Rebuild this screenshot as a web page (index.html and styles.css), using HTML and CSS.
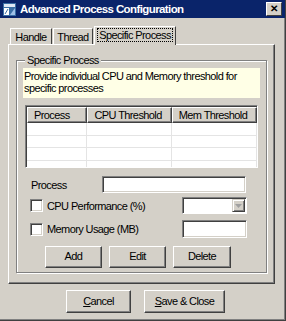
FILE: index.html
```html
<!DOCTYPE html>
<html lang="en">
<head>
  <meta charset="UTF-8" />
  <title>Advanced Process Configuration</title>
  <link rel="stylesheet" href="styles.css">
</head>
<body>
  <div class="window">
    <div class="titlebar">
      <svg class="app-icon" width="13" height="13" viewBox="0 0 13 13">
        <rect x="0" y="0" width="13" height="13" fill="#3a6ea5"/>
        <rect x="1" y="1" width="11" height="3" fill="#dfe8f5"/>
        <rect x="1" y="5" width="5" height="7" fill="#ffffff"/>
        <path d="M7 12 L12 5 L12 12 Z" fill="#9fc0e8"/>
        <path d="M2 11 L5 6" stroke="#3a6ea5" stroke-width="1"/>
      </svg>
      <span class="title">Advanced Process Configuration</span>
      <div class="close-btn">&#10005;</div>
    </div>

    <div class="client">
      <div class="tabs">
        <div class="tab t-handle">Handle</div>
        <div class="tab t-thread">Thread</div>
        <div class="tab t-specific active"><span class="focus">Specific Process</span></div>
      </div>

      <div class="panel">
        <div class="group">
          <div class="group-label">Specific Process</div>
          <div class="info">Provide individual CPU and Memory threshold for specific processes</div>

          <div class="list">
            <div class="list-head">
              <div class="col c1">Process</div>
              <div class="col c2">CPU Threshold</div>
              <div class="col c3">Mem Threshold</div>
            </div>
            <div class="list-row"><div class="cell c1"></div><div class="cell c2"></div><div class="cell c3"></div></div>
            <div class="list-row"><div class="cell c1"></div><div class="cell c2"></div><div class="cell c3"></div></div>
            <div class="list-row"><div class="cell c1"></div><div class="cell c2"></div><div class="cell c3"></div></div>
            <div class="list-row"><div class="cell c1"></div><div class="cell c2"></div><div class="cell c3"></div></div>
          </div>

          <div class="field-row process-row">
            <span class="label">Process</span>
            <div class="textbox wide"></div>
          </div>
          <div class="field-row cpu-row">
            <div class="checkbox"></div>
            <span class="label check-label">CPU Performance (%)</span>
            <div class="combo">
              <div class="combo-arrow">
                <svg width="7" height="4" viewBox="0 0 7 4"><path d="M0 0 H7 L3.5 4 Z" fill="#a0a0a0"/></svg>
              </div>
            </div>
          </div>
          <div class="field-row mem-row">
            <div class="checkbox"></div>
            <span class="label check-label">Memory Usage (MB)</span>
            <div class="textbox small"></div>
          </div>

          <div class="actions">
            <div class="btn add">Add</div>
            <div class="btn edit">Edit</div>
            <div class="btn delete">Delete</div>
          </div>
        </div>
      </div>

      <div class="footer">
        <div class="btn cancel"><u>C</u>ancel</div>
        <div class="btn save"><u>S</u>ave &amp; Close</div>
      </div>
    </div>
  </div>
</body>
</html>
```

FILE: styles.css
```css
body {
  margin: 0;
  padding: 0;
  font-family: 'Liberation Sans', Arial, sans-serif;
  font-size: 11px;
  letter-spacing: -0.6px;
  color: #000;
  background: #d4d0c8;
}
.window {
  width: 286px;
  height: 321px;
  box-sizing: border-box;
  background: #d4d0c8;
  border-right: 1px solid #404040;
  border-bottom: 1px solid #404040;
  box-shadow: inset -1px -1px 0 #808080;
  overflow: hidden;
}
.titlebar {
  height: 18px;
  background: #0a246a;
  display: flex;
  align-items: center;
  padding: 0 3px;
}
.app-icon {
  flex: none;
}
.title {
  color: #fff;
  font-weight: bold;
  font-size: 11.5px;
  letter-spacing: -0.6px;
  margin-left: 4px;
  flex: 1;
  white-space: nowrap;
}
.close-btn {
  width: 14px;
  height: 12px;
  background: #d4d0c8;
  border: 1px solid;
  border-color: #fff #404040 #404040 #fff;
  font-size: 10px;
  font-weight: bold;
  line-height: 12px;
  text-align: center;
  letter-spacing: 0;
}
.client {
  padding: 8px 0 0 8px;
}

/* tabs */
.tabs {
  display: flex;
  align-items: flex-end;
  height: 18px;
  padding-left: 2px;
  position: relative;
  z-index: 1;
}
.tab {
  height: 16px;
  line-height: 16px;
  text-align: center;
  white-space: nowrap;
  border: 1px solid;
  border-color: #fff #404040 transparent #fff;
  border-bottom: none;
  margin-right: 1px;
  box-sizing: border-box;
}
.t-handle { width: 42px; }
.t-thread { width: 40px; }
.t-specific { width: 82px; }
.tab.active {
  height: 19px;
  margin-bottom: -1px;
  background: #d4d0c8;
  line-height: 17px;
}
.tab .focus {
  outline: 1px dotted #000;
  padding: 0 1px;
}

.panel {
  width: 267px;
  height: 240px;
  box-sizing: border-box;
  border: 1px solid;
  border-color: #fff #404040 #404040 #fff;
  box-shadow: inset -1px -1px 0 #808080;
  padding: 15px 0 0 7px;
}
.group {
  width: 251px;
  height: 213px;
  box-sizing: border-box;
  border: 1px solid #808080;
  box-shadow: 1px 1px 0 #fff, inset 1px 1px 0 #fff;
  padding: 0 5px 0 6px;
}
.group-label {
  width: fit-content;
  height: 14px;
  margin: -8px 0 1px 2px;
  padding: 0 2px;
  background: #d4d0c8;
  line-height: 14px;
}
.info {
  background: #ffffe6;
  width: 237px;
  height: 30px;
  box-sizing: border-box;
  padding: 2px 1px;
  line-height: 12px;
}

/* list view */
.list {
  width: 233px;
  height: 63px;
  box-sizing: border-box;
  margin: 7px 0 0 2px;
  background: #fff;
  border: 1px solid;
  border-color: #808080 #fff #fff #808080;
  box-shadow: inset 1px 1px 0 #404040;
  padding: 1px 0 0 1px;
  overflow: hidden;
}
.list-head {
  display: flex;
  height: 16px;
}
.col {
  height: 16px;
  box-sizing: border-box;
  background: #d4d0c8;
  border: 1px solid;
  border-color: #fff #404040 #404040 #fff;
  box-shadow: inset -1px -1px 0 #808080;
  padding-left: 6px;
  line-height: 14px;
  white-space: nowrap;
}
.c1 { width: 61px; }
.c2 { width: 85px; }
.c3 { width: 86px; }
.list-row {
  display: flex;
  height: 12.5px;
}
.cell {
  box-sizing: border-box;
  border-right: 1px solid #e4e4e4;
  border-bottom: 1px solid #e4e4e4;
}

/* fields */
.field-row {
  display: flex;
  align-items: center;
}
.process-row {
  margin-top: 8px;
  height: 17px;
}
.cpu-row {
  margin-top: 4px;
  height: 17px;
}
.mem-row {
  margin-top: 6px;
  height: 18px;
}
.process-row .label {
  margin-left: 8px;
  width: 71px;
}
.textbox {
  box-sizing: border-box;
  background: #fff;
  border: 1px solid;
  border-color: #808080 #fff #fff #808080;
  box-shadow: inset 1px 1px 0 #404040, inset -1px -1px 0 #d4d0c8;
}
.textbox.wide {
  width: 144px;
  height: 17px;
}
.textbox.small {
  width: 65px;
  height: 18px;
  margin-left: auto;
  margin-right: 14px;
}
.checkbox {
  width: 13px;
  height: 13px;
  box-sizing: border-box;
  margin-left: 7px;
  background: #fff;
  border: 1px solid;
  border-color: #808080 #fff #fff #808080;
  box-shadow: inset 1px 1px 0 #404040, inset -1px -1px 0 #d4d0c8;
}
.check-label {
  margin-left: 4px;
}
.combo {
  width: 65px;
  height: 17px;
  box-sizing: border-box;
  margin-left: auto;
  margin-right: 14px;
  background: #fff;
  border: 1px solid;
  border-color: #808080 #fff #fff #808080;
  box-shadow: inset 1px 1px 0 #404040;
  display: flex;
  justify-content: flex-end;
  padding: 1px 1px 1px 0;
}
.combo-arrow {
  width: 13px;
  box-sizing: border-box;
  background: #d4d0c8;
  border: 1px solid;
  border-color: #d4d0c8 #404040 #404040 #d4d0c8;
  box-shadow: inset 1px 1px 0 #fff, inset -1px -1px 0 #808080;
  display: flex;
  align-items: center;
  justify-content: center;
}

/* buttons */
.btn {
  box-sizing: border-box;
  height: 22px;
  background: #d4d0c8;
  border: 1px solid;
  border-color: #fff #404040 #404040 #fff;
  box-shadow: inset -1px -1px 0 #808080;
  text-align: center;
  line-height: 19px;
}
.actions {
  display: flex;
  gap: 7px;
  margin: 8px 0 0 22px;
}
.btn.add { width: 57px; }
.btn.edit { width: 57px; }
.btn.delete { width: 58px; }
.footer {
  display: flex;
  gap: 13px;
  margin: 6px 0 0 58px;
}
.footer .btn {
  height: 23px;
  line-height: 20px;
}
.btn.cancel { width: 65px; }
.btn.save { width: 81px; }
```
